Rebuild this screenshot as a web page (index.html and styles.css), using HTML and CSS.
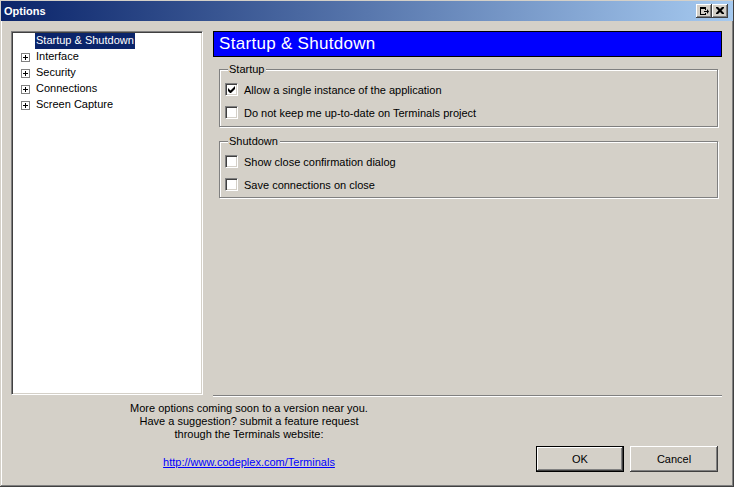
FILE: index.html
```html
<!DOCTYPE html>
<html>
<head>
<meta charset="utf-8">
<link rel="stylesheet" href="styles.css">
</head>
<body>
<div class="window">
  <div class="titlebar">
    <span class="title">Options</span>
    <div class="tbtns">
      <span class="tbtn"><svg width="16" height="14" viewBox="0 0 16 14"><rect x="4" y="3" width="6" height="2" fill="#000"/><rect x="4" y="3" width="1" height="8" fill="#000"/><rect x="4" y="10" width="6" height="1" fill="#000"/><rect x="9" y="3" width="1" height="3" fill="#000"/><rect x="9" y="9" width="1" height="2" fill="#000"/><rect x="8" y="7" width="3" height="1" fill="#000"/><polygon points="11,5 13,7.5 11,10" fill="#000"/></svg></span>
      <span class="tbtn close"><svg width="16" height="14" viewBox="0 0 16 14"><path d="M4 3h2l2 2 2-2h2v1l-2.5 2.5L12 9v1h-2L8 8l-2 2H4V9l2.5-2.5L4 4z" fill="#000"/></svg></span>
    </div>
  </div>
  <div class="main">
    <div class="tree">
      <div class="node"><span class="exp none"></span><span class="label sel">Startup &amp; Shutdown</span></div>
      <div class="node"><span class="exp"></span><span class="label">Interface</span></div>
      <div class="node"><span class="exp"></span><span class="label">Security</span></div>
      <div class="node"><span class="exp"></span><span class="label">Connections</span></div>
      <div class="node"><span class="exp"></span><span class="label">Screen Capture</span></div>
    </div>
    <div class="panel">
      <div class="header">Startup &amp; Shutdown</div>
      <fieldset class="group">
        <legend>Startup</legend>
        <div class="row"><span class="cb checked"><svg width="7" height="7" viewBox="0 0 7 7"><path d="M0 2v3l2 2h1l4-4V0L2.5 4.5z" fill="#000"/></svg></span><span>Allow a single instance of the application</span></div>
        <div class="row"><span class="cb"></span><span>Do not keep me up-to-date on Terminals project</span></div>
      </fieldset>
      <fieldset class="group second">
        <legend>Shutdown</legend>
        <div class="row"><span class="cb"></span><span>Show close confirmation dialog</span></div>
        <div class="row"><span class="cb"></span><span>Save connections on close</span></div>
      </fieldset>
    </div>
  </div>
  <div class="bottom">
    <div class="info">
      <p>More options coming soon to a version near you.<br>Have a suggestion? submit a feature request<br>through the Terminals website:</p>
      <a href="#">http://www.codeplex.com/Terminals</a>
    </div>
    <div class="buttons">
      <span class="btn default"><span>OK</span></span>
      <span class="btn"><span>Cancel</span></span>
    </div>
  </div>
</div>
</body>
</html>
```
FILE: styles.css
```css
html, body {
  margin: 0;
  padding: 0;
  background: #d4d0c8;
}
body {
  font-family: "Liberation Sans", Arial, sans-serif;
  font-size: 11px;
  color: #000;
}
.window {
  width: 734px;
  height: 487px;
  box-sizing: border-box;
  background: #d4d0c8;
  padding: 1px 1px 0 1px;
  box-shadow: inset -1px -1px 0 #404040, inset 1px 1px 0 #d4d0c8, inset -2px -2px 0 #808080, inset 2px 2px 0 #ffffff;
  display: flex;
  flex-direction: column;
}
.titlebar {
  height: 20px;
  background: linear-gradient(to right, #0a246a, #a6caf0);
  display: flex;
  align-items: center;
  justify-content: space-between;
  padding: 0 5px 0 3px;
}
.title {
  color: #fff;
  font-weight: bold;
  font-size: 11px;
}
.tbtns {
  display: flex;
  gap: 0;
}
.tbtn {
  width: 16px;
  height: 14px;
  background: #d4d0c8;
  box-shadow: inset -1px -1px 0 #404040, inset 1px 1px 0 #ffffff, inset -2px -2px 0 #808080;
  display: block;
}
.tbtn svg { display: block; }
.main {
  display: flex;
  gap: 10px;
  padding: 10px 11px 0 10px;
  height: 365px;
  box-sizing: content-box;
}
.tree {
  width: 192px;
  height: 364px;
  box-sizing: border-box;
  background: #fff;
  border: 1px solid;
  border-color: #808080 #ffffff #ffffff #808080;
  box-shadow: inset 1px 1px 0 #404040, inset -1px -1px 0 #d4d0c8;
  padding: 1px 2px;
}
.node {
  height: 16px;
  display: flex;
  align-items: center;
  padding-left: 7px;
}
.exp {
  width: 9px;
  height: 9px;
  box-sizing: border-box;
  border: 1px solid #808080;
  background:
    linear-gradient(#000, #000) center / 5px 1px no-repeat,
    linear-gradient(#000, #000) center / 1px 5px no-repeat,
    #fff;
  margin-right: 5px;
  flex: none;
}
.exp.none {
  border: 0;
  background: none;
}
.label {
  padding: 1px 1px 2px 1px;
  line-height: 13px;
}
.label.sel {
  background: #0a246a;
  color: #fff;
}
.panel {
  flex: 1;
  height: 364px;
  display: flex;
  flex-direction: column;
  border-bottom: 1px solid #808080;
  box-shadow: 0 1px 0 #ffffff;
}
.header {
  height: 26px;
  box-sizing: border-box;
  background: #0000ff;
  border: 1px solid #000;
  color: #fff;
  font-size: 17px;
  letter-spacing: 0.3px;
  line-height: 23px;
  padding-left: 5px;
}
.group {
  margin: 6px 4px 0 6px;
  border: 1px solid #808080;
  box-shadow: 1px 1px 0 #ffffff, inset 1px 1px 0 #ffffff;
  padding: 2px 5px 2px 5px;
  min-width: 0;
}
.group.second {
  margin-top: 8px;
  padding-bottom: 1px;
}
.group legend {
  padding: 0 2px 0 1px;
  margin-left: 3px;
  background: #d4d0c8;
  line-height: 13px;
}
.row {
  height: 23px;
  display: flex;
  align-items: center;
}
.cb {
  width: 13px;
  height: 13px;
  box-sizing: border-box;
  background: #fff;
  border: 1px solid;
  border-color: #808080 #ffffff #ffffff #808080;
  box-shadow: inset 1px 1px 0 #404040, inset -1px -1px 0 #d4d0c8;
  margin-right: 6px;
  display: flex;
  align-items: center;
  justify-content: center;
  flex: none;
}
.cb svg { display: block; }
.bottom {
  flex: 1;
  display: flex;
  justify-content: space-between;
  align-items: flex-end;
  padding: 6px 15px 15px 11px;
}
.info {
  width: 474px;
  align-self: flex-start;
  text-align: center;
}
.info p {
  margin: 0;
  line-height: 13px;
}
.info a {
  display: inline-block;
  margin-top: 15px;
  color: #0000ff;
  text-decoration: underline;
  line-height: 13px;
}
.buttons {
  display: flex;
  gap: 6px;
}
.btn {
  width: 88px;
  height: 26px;
  box-sizing: border-box;
  background: #d4d0c8;
  box-shadow: inset -1px -1px 0 #404040, inset 1px 1px 0 #ffffff, inset -2px -2px 0 #808080;
  display: flex;
  align-items: center;
  justify-content: center;
}
.btn.default {
  border: 1px solid #000;
  box-shadow: inset -1px -1px 0 #404040, inset 1px 1px 0 #ffffff, inset -2px -2px 0 #808080;
}
```
